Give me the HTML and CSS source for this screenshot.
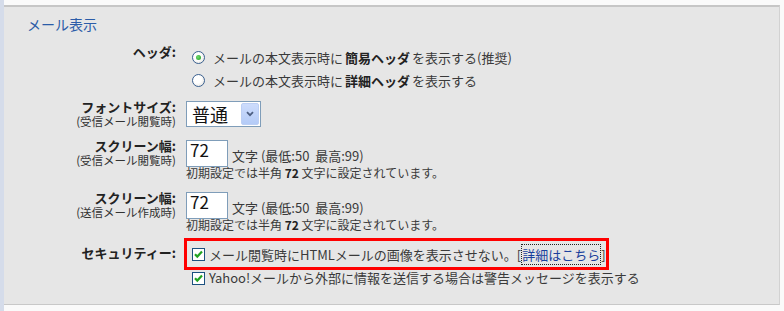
FILE: index.html
```html
<!DOCTYPE html>
<html lang="ja">
<head>
  <meta charset="UTF-8" />
  <meta name="viewport" content="width=device-width, initial-scale=1.0">
  <title>メール表示</title>
  <link rel="stylesheet" href="styles.css">
</head>
<body>
  <div class="page">
    <div class="side"></div>
    <div class="main">
      <div class="panel">
        <h2 class="title">メール表示</h2>

        <div class="row row-header">
          <div class="label">ヘッダ:</div>
          <div class="field">
            <div class="opt"><span class="radio on"></span>メールの本文表示時に <b>簡易ヘッダ</b> を表示する(推奨)</div>
            <div class="opt"><span class="radio"></span>メールの本文表示時に <b>詳細ヘッダ</b> を表示する</div>
          </div>
        </div>

        <div class="row row-font">
          <div class="label"><span class="main-label">フォントサイズ:</span><small>(受信メール閲覧時)</small></div>
          <div class="field">
            <div class="select">
              <span class="select-value">普通</span>
              <span class="select-btn">
                <svg width="8" height="6" viewBox="0 0 8 6"><path d="M1 1.2 L4 4.2 L7 1.2" fill="none" stroke="#4d5f82" stroke-width="1.8"/></svg>
              </span>
            </div>
          </div>
        </div>

        <div class="row row-width">
          <div class="label"><span class="main-label">スクリーン幅:</span><small>(受信メール閲覧時)</small></div>
          <div class="field">
            <div class="line">
              <input class="num" type="text" value="72">
              <span class="unit">文字 (最低:50&nbsp; 最高:99)</span>
            </div>
            <div class="note">初期設定では半角 <b>72</b> 文字に設定されています。</div>
          </div>
        </div>

        <div class="row row-width2">
          <div class="label"><span class="main-label">スクリーン幅:</span><small>(送信メール作成時)</small></div>
          <div class="field">
            <div class="line">
              <input class="num" type="text" value="72">
              <span class="unit">文字 (最低:50&nbsp; 最高:99)</span>
            </div>
            <div class="note">初期設定では半角 <b>72</b> 文字に設定されています。</div>
          </div>
        </div>

        <div class="row row-security">
          <div class="label">セキュリティー:</div>
          <div class="field">
            <div class="mark">
              <span class="check"><svg width="11" height="11" viewBox="0 0 11 11"><path d="M2 5.2 L4.3 7.6 L9 2.6" fill="none" stroke="#21a321" stroke-width="2.2"/></svg></span>
              メール閲覧時にHTMLメールの画像を表示させない。[<a class="more" href="#">詳細はこちら</a>]
            </div>
            <div class="opt2">
              <span class="check"><svg width="11" height="11" viewBox="0 0 11 11"><path d="M2 5.2 L4.3 7.6 L9 2.6" fill="none" stroke="#21a321" stroke-width="2.2"/></svg></span>
              Yahoo!メールから外部に情報を送信する場合は警告メッセージを表示する
            </div>
          </div>
        </div>
      </div>
    </div>
  </div>
</body>
</html>
```

FILE: styles.css
```css
body {
  margin: 0;
  font-family: "Noto Sans CJK JP", "Liberation Sans", sans-serif;
  font-size: 13px;
  color: #3a3a3a;
  background-color: #fafafa;
}
.page {
  display: flex;
  height: 311px;
}
.side {
  width: 4px;
  background-color: #d5dcea;
}
.main {
  flex: 1;
  padding: 5px 4px 0 0;
}
.panel {
  background-color: #e6e6e6;
  border-top: 2px solid #c6c6c6;
  border-bottom: 1px solid #c8c8c8;
  border-right: 1px solid #d2d2d2;
  padding: 7px 0 18px 0;
}
.title {
  margin: 0 0 0 23px;
  font-size: 14px;
  font-weight: normal;
  line-height: 20px;
  color: #2b5ca8;
}
.row {
  display: flex;
  align-items: flex-start;
}
.label {
  width: 172px;
  margin-right: 10px;
  text-align: right;
  font-weight: bold;
  color: #222;
  line-height: 15px;
}
.main-label {
  display: block;
}
.label small {
  display: block;
  font-size: 11.5px;
  font-weight: normal;
  color: #333;
}
.row-header {
  margin-top: 12px;
}
.row-header .label {
  margin-top: -2px;
  line-height: 16px;
}
.opt {
  display: flex;
  align-items: center;
  line-height: 23px;
  white-space: nowrap;
}
.opt b {
  margin: 0 2px;
  color: #222;
}
.radio {
  width: 11px;
  height: 11px;
  margin: 0 8px 0 6px;
  border: 1px solid #3a6090;
  border-radius: 50%;
  background: radial-gradient(circle at 40% 40%, #ffffff 40%, #dedbd3 100%);
  display: flex;
  align-items: center;
  justify-content: center;
}
.radio.on::after {
  content: "";
  width: 5px;
  height: 5px;
  border-radius: 50%;
  background: radial-gradient(circle at 40% 40%, #6fdc6f, #1f9a1f);
}
.row-font {
  margin-top: 9px;
}
.row-font .label {
  margin-top: -2px;
}
.select {
  display: flex;
  align-items: center;
  width: 75px;
  height: 26px;
  box-sizing: border-box;
  border: 1px solid #7f9db9;
  background-color: #fff;
  padding: 0 1px 0 5px;
}
.select-value {
  flex: 1;
  font-size: 18px;
  color: #111;
  line-height: 24px;
}
.select-btn {
  width: 18px;
  height: 22px;
  box-sizing: border-box;
  border: 1px solid #bccff4;
  border-radius: 2px;
  background: linear-gradient(#cddcfc, #b4cbf7);
  display: flex;
  align-items: center;
  justify-content: center;
}
.row-width {
  margin-top: 10px;
}
.row-width2 {
  margin-top: 12px;
}
.row-width .label, .row-width2 .label {
  margin-top: -1px;
}
.line {
  display: flex;
  align-items: flex-end;
  margin-top: 1px;
}
.num {
  width: 42px;
  height: 27px;
  box-sizing: border-box;
  border: 1px solid #7f9db9;
  padding: 0 3px 8px 3px;
  font-family: "Noto Sans CJK JP", "Liberation Sans", sans-serif;
  font-size: 17px;
  color: #111;
  background-color: #fff;
  margin: 0;
}
.unit {
  margin-left: 4px;
  margin-bottom: 4px;
  line-height: 14px;
  white-space: nowrap;
}
.note {
  font-size: 12px;
  line-height: 12px;
  white-space: nowrap;
}
.note b {
  color: #222;
}
.row-security {
  margin-top: 7px;
}
.row-security .label {
  margin-top: 7px;
  line-height: 16px;
}
.mark {
  display: flex;
  align-items: center;
  width: 425px;
  height: 32px;
  box-sizing: border-box;
  margin-left: -2px;
  border: 3px solid #ff0000;
  padding-left: 5px;
  white-space: nowrap;
}
.opt2 {
  display: flex;
  align-items: center;
  line-height: 16px;
  padding-left: 6px;
  white-space: nowrap;
}
.check {
  width: 11px;
  height: 11px;
  border: 1px solid #1c5180;
  background-color: #fff;
  margin-right: 4px;
  display: flex;
  align-items: center;
  justify-content: center;
}
.more {
  color: #1a3f9c;
  text-decoration: none;
  outline: 1px dotted #222;
  outline-offset: 0;
  margin: 0 1px;
}
```
